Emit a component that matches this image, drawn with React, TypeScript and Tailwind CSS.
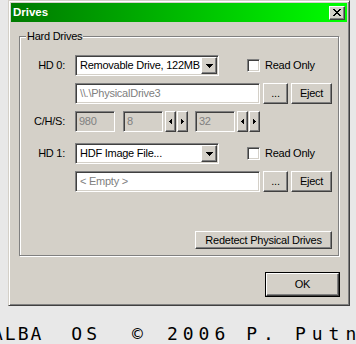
import React from "react";

const raised =
  "bg-[#d4d0c8] border border-t-white border-l-white border-r-[#404040] border-b-[#404040] shadow-[inset_-1px_-1px_0_#808080]";
const sunken =
  "border border-t-[#808080] border-l-[#808080] border-r-white border-b-white shadow-[inset_1px_1px_0_#404040,inset_-1px_-1px_0_#d4d0c8]";

function LeftArrow() {
  return (
    <svg width="3" height="5" viewBox="0 0 3 5" shapeRendering="crispEdges">
      <path d="M2 0h1v5H2zM1 1h1v3H1zM0 2h1v1H0z" fill="#000" />
    </svg>
  );
}
function RightArrow() {
  return (
    <svg width="3" height="5" viewBox="0 0 3 5" shapeRendering="crispEdges">
      <path d="M0 0h1v5H0zM1 1h1v3H1zM2 2h1v1H2z" fill="#000" />
    </svg>
  );
}
function DownArrow() {
  return (
    <svg width="7" height="4" viewBox="0 0 7 4" shapeRendering="crispEdges">
      <path d="M0 0h7v1H0zM1 1h5v1H1zM2 2h3v1H2zM3 3h1v1H3z" fill="#000" />
    </svg>
  );
}

function Spin() {
  return (
    <div className="flex">
      <div className={`${raised} ml-[2px] w-[11px] h-[21px] flex items-center justify-center`}>
        <LeftArrow />
      </div>
      <div className={`${raised} ml-[1px] w-[11px] h-[21px] flex items-center justify-center`}>
        <RightArrow />
      </div>
    </div>
  );
}

function Combo({ text }: { text: string }) {
  return (
    <div className={`${sunken} bg-white w-[144px] h-[21px] flex items-stretch p-[1px]`}>
      <div className="flex-1 flex items-center pl-[3px] text-black whitespace-nowrap overflow-hidden">{text}</div>
      <div className={`${raised} w-[16px] flex items-center justify-center`}>
        <DownArrow />
      </div>
    </div>
  );
}

function ReadOnly() {
  return (
    <div className="flex items-center ml-[28px]">
      <div className={`${sunken} bg-white w-[13px] h-[13px]`} />
      <span className="ml-[5px] text-black">Read Only</span>
    </div>
  );
}

function PathRow({ text }: { text: string }) {
  return (
    <div className="flex items-center ml-[55px]">
      <div className={`${sunken} bg-white w-[185px] h-[21px] flex items-center pl-[4px] text-[#808080] whitespace-nowrap`}>
        {text}
      </div>
      <div className={`${raised} ml-[3px] w-[25px] h-[21px] flex items-center justify-center text-black`}>...</div>
      <div className={`${raised} ml-[3px] w-[41px] h-[21px] flex items-center justify-center text-black`}>Eject</div>
    </div>
  );
}

function NumBox({ v }: { v: string }) {
  return (
    <div className={`${sunken} bg-[#d4d0c8] w-[40px] h-[21px] flex items-center pl-[3px] text-[#808080]`}>{v}</div>
  );
}

export default function App() {
  return (
    <div
      className="w-[356px] h-[344px] bg-[#e8e8e8] overflow-hidden text-[11px] leading-[13px] tracking-[-0.25px]"
      style={{ fontFamily: '"Liberation Sans", Arial, sans-serif' }}
    >
      <div className="ml-[8px] w-[342px] h-[306px] bg-[#d4d0c8] border border-t-[#d4d0c8] border-l-[#d4d0c8] border-r-[#404040] border-b-[#404040] shadow-[inset_1px_1px_0_#fff,inset_-1px_-1px_0_#808080] p-[2px] flex flex-col">
        <div className="h-[19px] bg-gradient-to-r from-[#007a00] to-[#00ff00] flex items-center justify-between">
          <span className="pl-[2px] text-white font-bold text-[11.5px] tracking-normal">Drives</span>
          <div className={`${raised} mr-[2px] w-[16px] h-[14px] flex items-center justify-center`}>
            <svg width="8" height="7" viewBox="0 0 8 7" shapeRendering="crispEdges">
              <path
                d="M0 0h2v1H0zM6 0h2v1H6zM1 1h2v1H1zM5 1h2v1H5zM2 2h4v1H2zM3 3h2v1H3zM2 4h4v1H2zM1 5h2v1H1zM5 5h2v1H5zM0 6h2v1H0zM6 6h2v1H6z"
                fill="#000"
              />
            </svg>
          </div>
        </div>

        <div className="relative ml-[8px] mt-[14px] w-[320px] h-[220px] border border-[#808080] shadow-[1px_1px_0_#fff,inset_1px_1px_0_#fff] flex flex-col pt-[18px]">
          <span className="absolute left-[6px] top-[-7px] px-[1px] bg-[#d4d0c8] text-black">Hard Drives</span>

          <div className="flex items-center">
            <div className="w-[45px] text-right text-black">HD 0:</div>
            <div className="ml-[10px]">
              <Combo text="Removable Drive, 122MB" />
            </div>
            <ReadOnly />
          </div>

          <div className="mt-[7px]">
            <PathRow text="\\.\PhysicalDrive3" />
          </div>

          <div className="mt-[7px] flex items-center">
            <div className="w-[45px] text-right text-black">C/H/S:</div>
            <div className="ml-[10px]">
              <NumBox v="980" />
            </div>
            <div className="ml-[8px]">
              <NumBox v="8" />
            </div>
            <Spin />
            <div className="ml-[7px]">
              <NumBox v="32" />
            </div>
            <Spin />
          </div>

          <div className="mt-[11px] flex items-center">
            <div className="w-[45px] text-right text-black">HD 1:</div>
            <div className="ml-[10px]">
              <Combo text="HDF Image File..." />
            </div>
            <ReadOnly />
          </div>

          <div className="mt-[7px]">
            <PathRow text="< Empty >" />
          </div>

          <div className="mt-[39px] self-end mr-[6px]">
            <div className={`${raised} w-[137px] h-[18px] flex items-center justify-center text-black`}>
              Redetect Physical Drives
            </div>
          </div>
        </div>

        <div className="mt-[16px] self-end mr-[7px] w-[75px] h-[25px] border border-black">
          <div className={`${raised} w-full h-full flex items-center justify-center text-black`}>OK</div>
        </div>
      </div>

      <div
        className="mt-[19px] flex whitespace-pre text-[18px] leading-[18px] text-black"
        style={{ fontFamily: '"DejaVu Sans Mono", monospace' }}
      >
        <span className="ml-[-8px] tracking-[2px]">ALBA</span>
        <span className="ml-[28px] tracking-[4px]">OS</span>
        <span className="ml-[31px] tracking-[0px]">©</span>
        <span className="ml-[24px] tracking-[5px]">2006</span>
        <span className="ml-[16px] tracking-[6px]">P.</span>
        <span className="ml-[15px] tracking-[6px]">Putnik</span>
      </div>
    </div>
  );
}
